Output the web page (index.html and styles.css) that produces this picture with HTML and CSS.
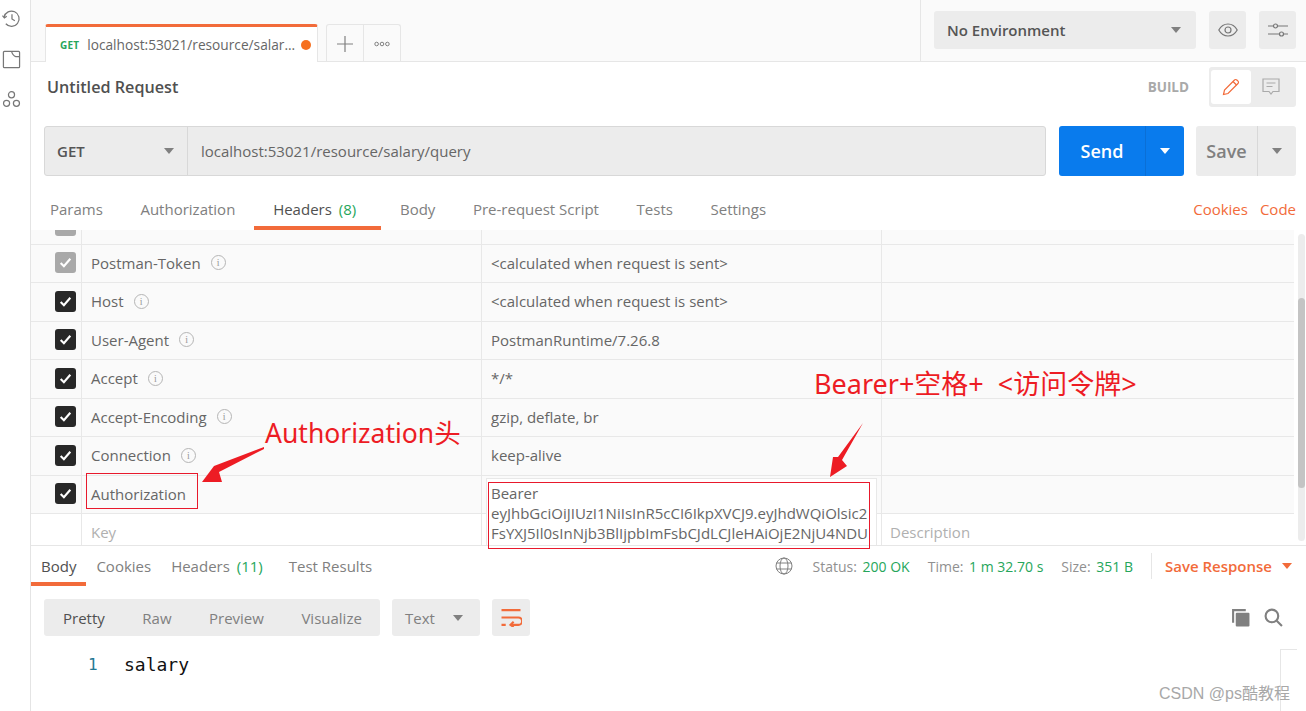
FILE: index.html
```html
<!DOCTYPE html>
<html lang="en">
<head>
  <meta charset="UTF-8">
  <title>Postman</title>
  <link rel="stylesheet" href="styles.css">
</head>
<body>
  <div class="app">
    <aside class="sidebar">
      <svg class="side-icon" viewBox="0 0 20 20"><path d="M2.200 8.500A8 8 0 1 1 4 15.500"/><path d="M.5 7l2 2.400L5 7.600"/><path d="M10.500 5.500v5l3 1.800"/></svg>
      <svg class="side-icon" viewBox="0 0 20 20"><path d="M2.500 1.500h15a1 1 0 0 1 1 1v15a1 1 0 0 1-1 1h-15a1 1 0 0 1-1-1v-15a1 1 0 0 1 1-1z"/><path d="M10 1.500c1 3 2.500 5 4.500 5.500h4"/></svg>
      <svg class="side-icon" viewBox="0 0 20 20"><circle cx="10" cy="5" r="3.200"/><circle cx="4.800" cy="14" r="3.200"/><circle cx="15.200" cy="14" r="3.200"/></svg>
    </aside>

    <main class="main">
      <header class="topbar">
        <div class="tab-strip">
          <div class="tab">
            <span class="tab-method">GET</span>
            <span class="tab-url">localhost:53021/resource/salar...</span>
            <span class="tab-dot"></span>
          </div>
          <div class="tab-tools">
            <div class="tab-tool tab-add">
              <svg viewBox="0 0 16 16"><path d="M8 0v16M0 8h16"/></svg>
            </div>
            <div class="tab-tool tab-more">
              <svg viewBox="0 0 16 6"><circle cx="2.600" cy="3" r="1.800"/><circle cx="8" cy="3" r="1.800"/><circle cx="13.400" cy="3" r="1.800"/></svg>
            </div>
          </div>
        </div>
        <div class="env-area">
          <div class="env-select">
            <span>No Environment</span>
            <span class="caret"></span>
          </div>
          <div class="icon-btn">
            <svg viewBox="0 0 20 14"><path d="M.8 7C3 3 6.200 1 10 1s7 2 9.200 6c-2.200 4-5.400 6-9.200 6S3 11 .8 7z"/><circle cx="10" cy="7" r="3"/></svg>
          </div>
          <div class="icon-btn">
            <svg viewBox="0 0 20 14"><path d="M0 3h5.500M9.500 3H20M0 11h11.500M15.500 11H20"/><circle cx="7.500" cy="3" r="2"/><circle cx="13.500" cy="11" r="2"/></svg>
          </div>
        </div>
      </header>

      <div class="title-row">
        <h1 class="request-title">Untitled Request</h1>
        <span class="build-label">BUILD</span>
        <div class="mode-switch">
          <div class="mode-btn mode-active">
            <svg viewBox="0 0 18 18"><path class="pencil" d="M1.500 16.500l1-4.500L12.500 2a1.600 1.600 0 0 1 2.300 0l1.200 1.200a1.600 1.600 0 0 1 0 2.300L6 15.500z"/><path class="pencil" d="M11 3.500L14.500 7"/></svg>
          </div>
          <div class="mode-btn">
            <svg viewBox="0 0 18 18"><path class="comment" d="M1 1h16v12.500h-6L9 16l-2-2.500H1z"/><path class="comment" d="M4.500 5h9M4.500 8.500h6"/></svg>
          </div>
        </div>
      </div>

      <div class="url-row">
        <div class="url-group">
          <div class="method-select">
            <span>GET</span>
            <span class="caret"></span>
          </div>
          <div class="url-input">localhost:53021/resource/salary/query</div>
        </div>
        <div class="send-btn">
          <span class="send-label">Send</span>
          <span class="send-arrow"><span class="caret caret-white"></span></span>
        </div>
        <div class="save-btn">
          <span class="save-label">Save</span>
          <span class="save-arrow"><span class="caret"></span></span>
        </div>
      </div>

      <nav class="req-tabs">
        <a class="req-tab">Params</a>
        <a class="req-tab">Authorization</a>
        <a class="req-tab req-tab-active">Headers <em class="count">(8)</em></a>
        <a class="req-tab">Body</a>
        <a class="req-tab">Pre-request Script</a>
        <a class="req-tab">Tests</a>
        <a class="req-tab">Settings</a>
        <span class="req-links"><a>Cookies</a><a>Code</a></span>
      </nav>

      <section class="headers-wrap">
        <div class="headers-table">
          <div class="row row-cut">
            <div class="cell cell-check"><span class="check check-off"></span></div>
            <div class="cell cell-key"></div>
            <div class="cell cell-value"></div>
            <div class="cell cell-desc"></div>
          </div>
          <div class="row">
            <div class="cell cell-check"><span class="check check-off"><svg viewBox="0 0 14 14"><path d="M2.500 7.500l3 3 6-7"/></svg></span></div>
            <div class="cell cell-key">Postman-Token <i class="info">i</i></div>
            <div class="cell cell-value">&lt;calculated when request is sent&gt;</div>
            <div class="cell cell-desc"></div>
          </div>
          <div class="row">
            <div class="cell cell-check"><span class="check"><svg viewBox="0 0 14 14"><path d="M2.500 7.500l3 3 6-7"/></svg></span></div>
            <div class="cell cell-key">Host <i class="info">i</i></div>
            <div class="cell cell-value">&lt;calculated when request is sent&gt;</div>
            <div class="cell cell-desc"></div>
          </div>
          <div class="row">
            <div class="cell cell-check"><span class="check"><svg viewBox="0 0 14 14"><path d="M2.500 7.500l3 3 6-7"/></svg></span></div>
            <div class="cell cell-key">User-Agent <i class="info">i</i></div>
            <div class="cell cell-value">PostmanRuntime/7.26.8</div>
            <div class="cell cell-desc"></div>
          </div>
          <div class="row">
            <div class="cell cell-check"><span class="check"><svg viewBox="0 0 14 14"><path d="M2.500 7.500l3 3 6-7"/></svg></span></div>
            <div class="cell cell-key">Accept <i class="info">i</i></div>
            <div class="cell cell-value">*/*</div>
            <div class="cell cell-desc"></div>
          </div>
          <div class="row">
            <div class="cell cell-check"><span class="check"><svg viewBox="0 0 14 14"><path d="M2.500 7.500l3 3 6-7"/></svg></span></div>
            <div class="cell cell-key">Accept-Encoding <i class="info">i</i></div>
            <div class="cell cell-value">gzip, deflate, br</div>
            <div class="cell cell-desc"></div>
          </div>
          <div class="row">
            <div class="cell cell-check"><span class="check"><svg viewBox="0 0 14 14"><path d="M2.500 7.500l3 3 6-7"/></svg></span></div>
            <div class="cell cell-key">Connection <i class="info">i</i></div>
            <div class="cell cell-value">keep-alive</div>
            <div class="cell cell-desc"></div>
          </div>
          <div class="row">
            <div class="cell cell-check"><span class="check"><svg viewBox="0 0 14 14"><path d="M2.500 7.500l3 3 6-7"/></svg></span></div>
            <div class="cell cell-key">Authorization</div>
            <div class="cell cell-value"></div>
            <div class="cell cell-desc"></div>
          </div>
          <div class="row row-new">
            <div class="cell cell-check"></div>
            <div class="cell cell-key">Key</div>
            <div class="cell cell-value"></div>
            <div class="cell cell-desc">Description</div>
          </div>
          <div class="bearer-edit">Bearer<br>eyJhbGciOiJIUzI1NiIsInR5cCI6IkpXVCJ9.eyJhdWQiOlsic2<br>FsYXJ5Il0sInNjb3BlIjpbImFsbCJdLCJleHAiOjE2NjU4NDU</div>
        </div>
        <div class="scrollbar"><span class="scroll-thumb"></span></div>
      </section>

      <section class="response">
        <div class="res-bar">
          <a class="res-tab res-tab-active">Body</a>
          <a class="res-tab">Cookies</a>
          <a class="res-tab">Headers <em class="count">(11)</em></a>
          <a class="res-tab">Test Results</a>
          <div class="res-meta">
            <svg class="globe" viewBox="0 0 18 18"><circle cx="9" cy="9" r="8"/><ellipse cx="9" cy="9" rx="4" ry="8"/><path d="M1.500 6h15M1.500 12h15"/></svg>
            <span class="meta-item">Status: <b>200 OK</b></span>
            <span class="meta-item">Time: <b>1 m 32.70 s</b></span>
            <span class="meta-item">Size: <b>351 B</b></span>
            <span class="save-response">Save Response <span class="caret caret-orange"></span></span>
          </div>
        </div>
        <div class="res-tools">
          <div class="view-group">
            <span class="view-item view-active">Pretty</span>
            <span class="view-item">Raw</span>
            <span class="view-item">Preview</span>
            <span class="view-item">Visualize</span>
          </div>
          <div class="format-select"><span>Text</span><span class="caret"></span></div>
          <div class="wrap-btn">
            <svg viewBox="0 0 20 18"><path d="M1 2h18M1 9h16a2.500 2.500 0 0 1 0 7h-7M1 16h4"/><path d="M12.500 13l-3 3 3 2"/></svg>
          </div>
          <div class="res-actions">
            <svg class="copy-icon" viewBox="0 0 18 18"><path class="copy-back" d="M2 14V2h12"/><rect x="4.500" y="4.500" width="13" height="13" rx="1"/></svg>
            <svg class="search-icon" viewBox="0 0 18 18"><circle cx="7.500" cy="7.500" r="6"/><path d="M12 12l5 5"/></svg>
          </div>
        </div>
        <div class="code-area">
          <span class="line-no">1</span>
          <span class="code-text">salary</span>
        </div>
        <div class="minimap"></div>
      </section>
    </main>
  </div>

  <!-- annotations drawn over the screenshot -->
  <div class="mark-box mark-key"></div>
  <div class="mark-box mark-value"></div>
  <div class="mark-text mark-text-key">Authorization头</div>
  <div class="mark-text mark-text-value">Bearer+空格+  &lt;访问令牌&gt;</div>
  <svg class="mark-arrows" viewBox="0 0 1306 711"><polygon points="264,447 214,466 202,482 222,482 219,472 264,449"/><polygon points="863,423 838,457 833,457 830,477 847,466 842,460"/></svg>
  <div class="watermark">CSDN @ps酷教程</div>
</body>
</html>
```

FILE: styles.css
```css
* {
  box-sizing: border-box;
}
html, body {
  margin: 0;
  height: 100%;
  overflow: hidden;
}
body {
  background: white;
  color: #505050;
  font-family: "Open Sans", "Noto Sans CJK SC", sans-serif;
  font-size: 15px;
}
em {
  font-style: normal;
}

.app {
  display: flex;
  width: 1306px;
  height: 711px;
}
.sidebar {
  width: 31px;
  flex-shrink: 0;
  border-right: 1px solid #e4e4e4;
  background: white;
  display: flex;
  flex-direction: column;
  align-items: center;
  padding: 9px 8px 0 0;
  gap: 21.500px;
}
.side-icon {
  width: 19px;
  height: 19px;
  flex-shrink: 0;
  fill: none;
  stroke: #777;
  stroke-width: 1.3;
}
.main {
  flex: 1;
  min-width: 0;
  display: flex;
  flex-direction: column;
}

/* top bar */
.topbar {
  height: 62px;
  flex-shrink: 0;
  display: flex;
  justify-content: space-between;
  background: #fafafa;
  border-bottom: 1px solid #e6e6e6;
}
.tab-strip {
  display: flex;
  align-items: flex-end;
  padding-left: 14px;
  margin-bottom: -1px;
}
.tab {
  width: 273px;
  height: 38px;
  background: white;
  border-top: 3px solid #f26b3a;
  border-right: 1px solid #e6e6e6;
  border-left: 1px solid #e6e6e6;
  border-radius: 3px 3px 0 0;
  display: flex;
  align-items: center;
  padding-left: 14px;
}
.tab-method {
  color: #26a65b;
  font-size: 10px;
  font-weight: 700;
  margin-right: 8px;
  letter-spacing: .2px;
}
.tab-url {
  color: #666;
  font-size: 13.700px;
  white-space: nowrap;
}
.tab-dot {
  width: 10px;
  height: 10px;
  border-radius: 50%;
  background: #f6701f;
  margin-left: 6px;
}
.tab-tools {
  display: flex;
  height: 38px;
  margin-left: 8px;
  border: 1px solid #e6e6e6;
  border-bottom: none;
  border-radius: 3px 3px 0 0;
}
.tab-tool {
  display: flex;
  align-items: center;
  justify-content: center;
}
.tab-add {
  width: 37px;
  border-right: 1px solid #e6e6e6;
}
.tab-add svg {
  width: 16px;
  height: 16px;
  fill: none;
  stroke: #808080;
  stroke-width: 1.200;
}
.tab-more {
  width: 36px;
}
.tab-more svg {
  width: 16px;
  height: 6px;
  fill: none;
  stroke: #808080;
  stroke-width: 1;
}
.env-area {
  width: 386px;
  border-left: 1px solid #e6e6e6;
  display: flex;
  align-items: flex-start;
  padding: 11px 0 0 13px;
}
.env-select {
  width: 262px;
  height: 38px;
  border-radius: 3px;
  background: #ececec;
  display: flex;
  align-items: center;
  justify-content: space-between;
  padding: 0 15px 0 13px;
  font-weight: 600;
  color: #555;
}
.caret {
  display: inline-block;
  width: 0;
  height: 0;
  border-left: 5.500px solid transparent;
  border-right: 5.500px solid transparent;
  border-top: 6px solid #808080;
}
.caret-white {
  border-top-color: white;
}
.caret-orange {
  border-top-color: #f26b3a;
  margin-left: 10px;
}
.icon-btn {
  width: 37px;
  height: 38px;
  margin-left: 13px;
  border-radius: 3px;
  background: #ececec;
  display: flex;
  align-items: center;
  justify-content: center;
}
.icon-btn svg {
  width: 20px;
  height: 14px;
  fill: none;
  stroke: #777;
  stroke-width: 1.200;
}

/* request title */
.title-row {
  height: 64px;
  flex-shrink: 0;
  display: flex;
  align-items: flex-start;
  padding: 5px 10px 0 16px;
}
.request-title {
  margin: 9px 0 0;
  font-size: 16.200px;
  font-weight: 600;
  color: #505050;
  flex: 1;
}
.build-label {
  margin: 11px 20px 0 0;
  color: #a9a9a9;
  font-size: 13.500px;
  font-weight: 700;
}
.mode-switch {
  width: 87px;
  height: 40px;
  padding: 3px 2px;
  display: flex;
  border-radius: 3px;
  background: #ececec;
}
.mode-btn {
  width: 40px;
  display: flex;
  align-items: center;
  justify-content: center;
  border-radius: 3px;
}
.mode-active {
  background: white;
}
.mode-btn svg {
  width: 18px;
  height: 18px;
  fill: none;
  stroke-width: 1.200;
}
.pencil {
  stroke: #f26b3a;
}
.comment {
  stroke: #aaa;
}

/* url row */
.url-row {
  height: 50px;
  flex-shrink: 0;
  display: flex;
  padding-left: 13px;
}
.url-group {
  width: 1002px;
  display: flex;
  background: #ececec;
  border: 1px solid #d8d8d8;
  border-radius: 3px;
}
.method-select {
  width: 143px;
  border-right: 1px solid #d8d8d8;
  display: flex;
  align-items: center;
  justify-content: space-between;
  padding: 0 13px 0 12px;
  font-weight: 600;
  color: #555;
}
.url-input {
  flex: 1;
  display: flex;
  align-items: center;
  padding-left: 13px;
  color: #666;
}
.send-btn {
  width: 125px;
  margin-left: 13px;
  display: flex;
  border-radius: 3px;
  background: #097bed;
  color: white;
  font-size: 18px;
  font-weight: 600;
}
.send-label {
  flex: 1;
  display: flex;
  align-items: center;
  justify-content: center;
  border-right: 1px solid #0a6fd6;
}
.send-arrow, .save-arrow {
  width: 38px;
  display: flex;
  align-items: center;
  justify-content: center;
}
.save-btn {
  width: 100px;
  margin-left: 12px;
  display: flex;
  border-radius: 3px;
  background: #ececec;
  color: #808080;
  font-size: 18px;
  font-weight: 600;
}
.save-label {
  flex: 1;
  display: flex;
  align-items: center;
  justify-content: center;
  border-right: 1px solid #d8d8d8;
}

/* request tabs */
.req-tabs {
  height: 54px;
  flex-shrink: 0;
  display: flex;
  align-items: flex-end;
  padding-left: .2px;
}
.req-tab {
  padding: 0 18.800px 8px;
  color: #808080;
  height: 34px;
  display: flex;
  align-items: center;
  white-space: pre;
}
.req-tab-active {
  color: #505050;
  border-bottom: 4px solid #f26b3a;
  padding: 0 25px 4px 19px;
}
.count {
  color: #26a65b;
  margin-left: 3px;
}
.req-links {
  margin-left: auto;
  padding: 0 10px 8px 0;
  height: 34px;
  display: flex;
  align-items: center;
  gap: 12px;
  color: #f26b3a;
}

/* headers table */
.headers-wrap {
  height: 315px;
  flex-shrink: 0;
  display: flex;
  overflow: hidden;
}
.headers-table {
  position: relative;
  width: 1263px;
  background: #fafafa;
}
.row {
  display: flex;
  height: 38.500px;
  border-bottom: 1px solid #e8e8e8;
}
.row-cut {
  height: 14.500px;
}
.row-new {
  background: white;
  color: #b0b0b0;
}
.cell {
  display: flex;
  align-items: center;
  border-right: 1px solid #e8e8e8;
  padding: 0 0 1px 9px;
}
.cell-check {
  width: 51px;
  padding-left: 24px;
}
.row-cut .cell-check {
  align-items: flex-end;
  padding-bottom: 8px;
}
.cell-key {
  width: 400px;
  color: #666;
}
.row-new .cell-key, .row-new .cell-desc {
  color: #b0b0b0;
}
.cell-value {
  width: 400px;
  color: #666;
}
.cell-desc {
  flex: 1;
  border-right: none;
  padding-left: 8px;
}
.check {
  width: 21px;
  height: 21px;
  flex-shrink: 0;
  display: flex;
  align-items: center;
  justify-content: center;
  border-radius: 3px;
  background: #282828;
}
.check-off {
  background: #a9a9a9;
}
.check svg {
  width: 15px;
  height: 15px;
  fill: none;
  stroke: white;
  stroke-width: 2;
}
.info {
  width: 15px;
  height: 15px;
  margin-left: 10px;
  border: 1px solid #b5b5b5;
  border-radius: 50%;
  display: inline-flex;
  align-items: center;
  justify-content: center;
  font: 10px "Liberation Serif", serif;
  color: #999;
}
.bearer-edit {
  position: absolute;
  left: 455px;
  top: 248px;
  width: 391px;
  height: 70px;
  padding: 4px 4px;
  background: white;
  border: 1px solid #e8e8e8;
  line-height: 20px;
  color: #666;
  white-space: nowrap;
  overflow: hidden;
}
.scrollbar {
  width: 7px;
  height: 307px;
  margin: 4px 0 0 4px;
  border-radius: 4px;
  background: #ececec;
}
.scroll-thumb {
  display: block;
  height: 190px;
  margin-top: 64px;
  border-radius: 4px;
  background: #c4c4c4;
}

/* response */
.response {
  position: relative;
  flex: 1;
  min-height: 0;
  border-top: 1px solid #e6e6e6;
}
.res-bar {
  height: 42px;
  display: flex;
  align-items: flex-start;
}
.res-tab {
  height: 40px;
  padding: 10px 10px 0;
  color: #808080;
  white-space: pre;
}
.res-tab-active {
  color: #505050;
  border-bottom: 4px solid #f26b3a;
}
.res-tab:last-of-type {
  margin-left: 6px;
}
.res-meta {
  margin-left: auto;
  height: 34px;
  margin-top: 3px;
  display: flex;
  align-items: center;
  font-size: 14px;
  color: #909090;
  padding-right: 14px;
}
.globe {
  width: 18px;
  height: 18px;
  margin-right: 20px;
  fill: none;
  stroke: #808080;
  stroke-width: 1;
}
.meta-item {
  margin-right: 18px;
}
.meta-item b {
  font-weight: 400;
  color: #26a65b;
  margin-left: 2px;
}
.save-response {
  height: 26px;
  display: flex;
  align-items: center;
  padding-left: 13px;
  border-left: 1px solid #e6e6e6;
  color: #f26b3a;
  font-size: 15px;
  font-weight: 600;
}
.res-tools {
  display: flex;
  height: 37px;
  margin-top: 11px;
  padding: 0 23px 0 13px;
}
.view-group {
  display: flex;
  width: 336px;
  align-items: center;
  gap: 37.500px;
  padding-left: 19px;
  background: #ececec;
  border-radius: 3px;
  color: #808080;
}
.view-active {
  color: #505050;
}
.format-select {
  width: 88px;
  margin-left: 12px;
  display: flex;
  align-items: center;
  justify-content: space-between;
  padding: 0 17px 0 13px;
  background: #ececec;
  border-radius: 3px;
  color: #808080;
}
.wrap-btn {
  width: 38px;
  margin-left: 12px;
  display: flex;
  align-items: center;
  justify-content: center;
  background: #ececec;
  border-radius: 3px;
}
.wrap-btn svg {
  width: 22px;
  height: 19px;
  fill: none;
  stroke: #f26b3a;
  stroke-width: 2;
}
.res-actions {
  margin-left: auto;
  display: flex;
  align-items: center;
  gap: 14px;
}
.copy-icon {
  width: 19px;
  height: 19px;
}
.copy-icon rect {
  fill: #808080;
}
.copy-back {
  fill: none;
  stroke: #808080;
  stroke-width: 2;
}
.search-icon {
  width: 19px;
  height: 19px;
  fill: none;
  stroke: #808080;
  stroke-width: 2;
}
.code-area {
  display: flex;
  align-items: center;
  height: 24px;
  margin-top: 16px;
  padding-left: 57px;
  font-family: "DejaVu Sans Mono", monospace;
  font-size: 16px;
}
.line-no {
  width: 36px;
  color: #237893;
}
.code-text {
  color: #111;
  font-size: 18px;
}
.minimap {
  position: absolute;
  right: 9px;
  bottom: 0;
  width: 17px;
  height: 62px;
  border: 1px solid #e6e6e6;
  border-bottom: none;
  border-right: none;
}

/* annotations */
.mark-box {
  position: absolute;
  border: 1px solid #e8192c;
}
.mark-key {
  left: 86px;
  top: 473px;
  width: 112px;
  height: 36px;
}
.mark-value {
  left: 488px;
  top: 482px;
  width: 382px;
  height: 67px;
}
.mark-text {
  position: absolute;
  color: #ed1c24;
  font-family: "Noto Sans", "Noto Sans CJK SC", sans-serif;
  white-space: pre;
}
.mark-text-key {
  left: 265px;
  top: 413px;
  font-size: 26.500px;
  line-height: 40px;
}
.mark-text-value {
  left: 814px;
  top: 366px;
  font-size: 27px;
  line-height: 36px;
}
.mark-arrows {
  position: absolute;
  left: 0;
  top: 0;
  width: 1306px;
  height: 711px;
  pointer-events: none;
  fill: #ed1c24;
}
.watermark {
  position: absolute;
  left: 1159px;
  top: 684px;
  font-family: "Liberation Sans", "Noto Sans CJK SC", sans-serif;
  font-size: 16px;
  line-height: 20px;
  color: #a8a8a8;
  white-space: nowrap;
}
```
